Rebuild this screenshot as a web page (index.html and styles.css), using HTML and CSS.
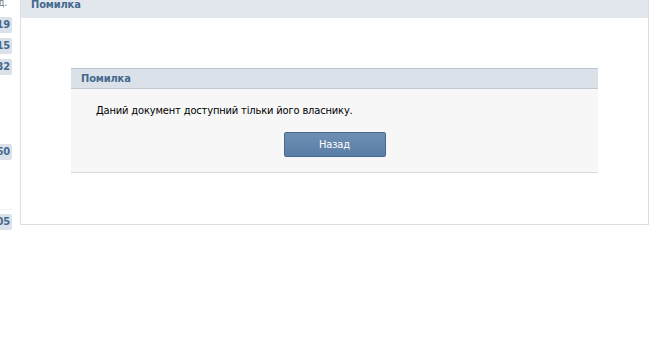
FILE: index.html
```html
<!DOCTYPE html>
<html lang="uk">
<head>
    <meta charset="UTF-8">
    <title>Помилка</title>
    <link rel="stylesheet" href="styles.css">
</head>
<body>
    <div class="page">
        <div class="side">
            <div class="side-inner">
                <div class="side-note">д.</div>
                <div class="count first">19</div>
                <div class="count">15</div>
                <div class="count">32</div>
                <div class="count far">60</div>
                <div class="side-line"></div>
                <div class="count">05</div>
            </div>
        </div>
        <div class="panel">
            <div class="panel-head">Помилка</div>
            <div class="panel-body">
                <div class="box">
                    <div class="box-head">Помилка</div>
                    <div class="box-body">
                        <p class="message">Даний документ доступний тільки його власнику.</p>
                        <div class="actions">
                            <button class="btn">Назад</button>
                        </div>
                    </div>
                </div>
            </div>
        </div>
    </div>
</body>
</html>
```

FILE: styles.css
```css
body {
    margin: 0;
    padding: 0;
    background: #fff;
    font-family: Tahoma, 'DejaVu Sans Condensed', 'Liberation Sans', sans-serif;
    font-size: 11px;
    letter-spacing: -0.15px;
    color: #000;
}

.page {
    display: flex;
    align-items: flex-start;
}

.side {
    width: 12px;
    overflow: hidden;
    margin-right: 8px;
    flex-shrink: 0;
}

.side-inner {
    width: 40px;
    margin-left: -28px;
    display: flex;
    flex-direction: column;
    align-items: flex-end;
}

.side-note {
    height: 10px;
    line-height: 8px;
    margin-top: -1px;
    color: #777;
    font-size: 10px;
    padding-right: 5px;
}

.count {
    width: 32px;
    height: 16px;
    line-height: 16px;
    margin-top: 5px;
    background: #dae1e8;
    border-radius: 2px;
    color: #45688e;
    font-weight: bold;
    text-align: right;
    padding-right: 2px;
    box-sizing: border-box;
}

.count.first {
    margin-top: 8px;
}

.count.far {
    margin-top: 69px;
}

.side-line {
    width: 40px;
    height: 1px;
    background: #eef0f3;
    margin-top: 49px;
    margin-bottom: -1px;
}

.panel {
    width: 629px;
    border: 1px solid #dbdfe3;
    border-top: none;
    box-sizing: border-box;
}

.panel-head {
    height: 18px;
    line-height: 10px;
    padding: 0 10px;
    background: #e1e7ed;
    color: #45688e;
    font-weight: bold;
    box-sizing: border-box;
}

.panel-body {
    padding: 50px 50px 51px;
}

.box {
    background: #f7f7f7;
    border-bottom: 1px solid #d9d9d9;
}

.box-head {
    height: 21px;
    line-height: 19px;
    padding: 0 10px;
    background: #dae1e8;
    border-top: 1px solid #b9c4cf;
    border-bottom: 1px solid #c2cad4;
    color: #45688e;
    font-weight: bold;
    box-sizing: border-box;
}

.box-body {
    padding: 14px 25px 15px;
}

.message {
    margin: 0;
    line-height: 16px;
}

.actions {
    display: flex;
    justify-content: center;
    margin-top: 13px;
}

.btn {
    width: 102px;
    height: 25px;
    border: 1px solid #45688e;
    border-radius: 2px;
    background: linear-gradient(#6d8fb3, #5a7ea6);
    color: #fff;
    font-family: inherit;
    font-size: 11px;
    letter-spacing: inherit;
    cursor: pointer;
}
```
